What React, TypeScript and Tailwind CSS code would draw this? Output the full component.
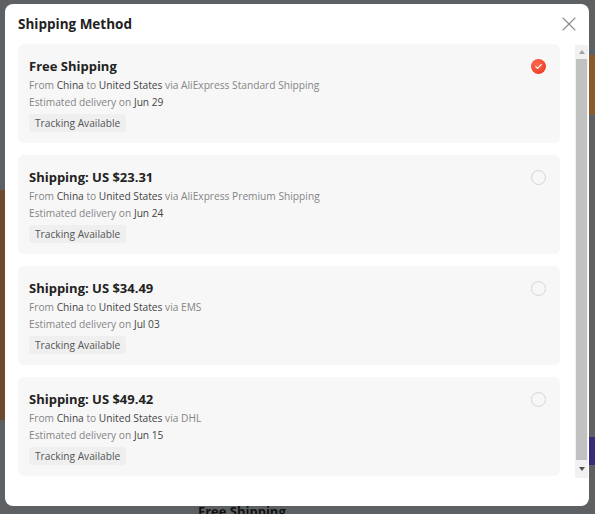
import { X } from "lucide-react";

interface Option {
  title: string;
  carrier: string;
  date: string;
  selected?: boolean;
}

const options: Option[] = [
  { title: "Free Shipping", carrier: "AliExpress Standard Shipping", date: "Jun 29", selected: true },
  { title: "Shipping: US $23.31", carrier: "AliExpress Premium Shipping", date: "Jun 24" },
  { title: "Shipping: US $34.49", carrier: "EMS", date: "Jul 03" },
  { title: "Shipping: US $49.42", carrier: "DHL", date: "Jun 15" },
];

function Radio({ checked }: { checked?: boolean }) {
  if (checked) {
    return (
      <span className="flex h-[15px] w-[15px] items-center justify-center rounded-full bg-[radial-gradient(circle_at_40%_35%,#ff6a4d,#e8321c)]">
        <svg width="9" height="9" viewBox="0 0 10 10" fill="none">
          <path d="M2 5.2l2 2 4-4.4" stroke="#fff" strokeWidth="1.3" strokeLinecap="round" strokeLinejoin="round" />
        </svg>
      </span>
    );
  }
  return <span className="block h-[15px] w-[15px] rounded-full border border-[#d4d4d4]" />;
}

function OptionCard({ option }: { option: Option }) {
  return (
    <div className="flex h-[99px] shrink-0 justify-between rounded-md bg-[#f7f7f7] pl-[11px] pr-[14px] pt-[12px]">
      <div className="flex flex-col">
        <h3 className="text-[13px] font-bold leading-[20px] text-[#222]">{option.title}</h3>
        <p className="mt-[1px] text-[10.2px] leading-[17px] text-[#858585]">
          From <span className="text-[#444]">China</span> to{" "}
          <span className="text-[#444]">United States</span> via {option.carrier}
        </p>
        <p className="text-[10.2px] leading-[17px] text-[#858585]">
          Estimated delivery on <span className="text-[#444]">{option.date}</span>
        </p>
        <span className="mt-[3px] self-start rounded-[3px] bg-[#efefef] px-[6px] text-[10.2px] leading-[18px] text-[#555]">
          Tracking Available
        </span>
      </div>
      <div className="pt-[3px]">
        <Radio checked={option.selected} />
      </div>
    </div>
  );
}

export default function App() {
  return (
    <div
      className="relative h-[514px] w-[595px] overflow-hidden bg-[#5d6163] pl-[5px] pt-[4px]"
      style={{ fontFamily: '"Open Sans", "Noto Sans", sans-serif' }}
    >
      {/* backdrop bits peeking out */}
      <div className="absolute left-0 top-[190px] h-[230px] w-[5px] bg-[#6b4a2e]" />
      <div className="absolute right-0 top-[55px] h-[60px] w-[6px] bg-[#8a5a2a]" />
      <div className="absolute right-0 top-[437px] h-[28px] w-[6px] bg-[#3b2a7a]" />
      <div className="absolute bottom-[-7px] left-[198px] text-[13px] font-bold text-[#111]">Free Shipping</div>

      <div className="relative flex h-[502px] w-[584px] flex-col rounded-lg bg-white">
        <div className="flex h-[40px] items-center justify-between pl-[13px] pr-[8px]">
          <h2 className="text-[13.5px] font-bold text-[#222]">Shipping Method</h2>
          <X className="h-[24px] w-[24px] text-[#8c8c8c]" strokeWidth={1.1} />
        </div>

        <div className="flex">
          <div className="flex w-[555px] flex-col gap-[12px] pl-[13px]">
            {options.map((o) => (
              <OptionCard key={o.title} option={o} />
            ))}
          </div>

          {/* scrollbar */}
          <div className="ml-[15px] mt-[1px] flex h-[433px] w-[13px] flex-col bg-[#f1f1f1]">
            <div className="flex h-[14px] items-center justify-center">
              <span className="h-0 w-0 border-x-[3.5px] border-b-[4px] border-x-transparent border-b-[#a3a3a3]" />
            </div>
            <div className="mx-[1px] flex-1 bg-[#c1c1c1]" />
            <div className="flex h-[18px] items-center justify-center">
              <span className="h-0 w-0 border-x-[3.5px] border-t-[4px] border-x-transparent border-t-[#505050]" />
            </div>
          </div>
        </div>
      </div>
    </div>
  );
}
